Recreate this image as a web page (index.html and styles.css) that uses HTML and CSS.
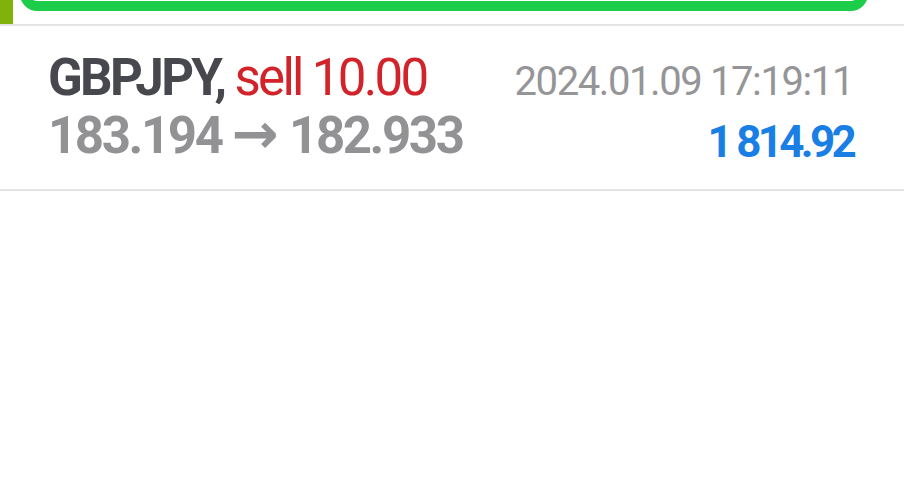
FILE: index.html
```html
<!DOCTYPE html>
<html lang="en">
<head>
    <meta charset="UTF-8">
    <meta name="viewport" content="width=device-width, initial-scale=1.0">
    <title>History</title>
    <link rel="stylesheet" href="styles.css">
</head>
<body>
    <!-- Верх: край предыдущего блока -->
    <div class="top">
        <div class="marker"></div>
        <div class="frame"></div>
    </div>

    <!-- Сделка -->
    <div class="deal">
        <div class="deal-row first">
            <div class="title">GBPJPY, <span class="sell">sell 10.00</span></div>
            <div class="date">2024.01.09 17:19:11</div>
        </div>
        <div class="deal-row second">
            <div class="prices">183.194 <span class="arrow">&rarr;</span> 182.933</div>
            <div class="profit">1 814.92</div>
        </div>
    </div>
</body>
</html>
```

FILE: styles.css
```css
/* Основной стиль для страницы */
body {
    font-family: 'Roboto', 'Liberation Sans', sans-serif;
    background-color: #ffffff;
    margin: 0;
}

/* Верхняя полоса */
.top {
    display: flex;
    height: 24px;
    overflow: hidden;
    border-bottom: 2px solid #e4e4e4;
}

.marker {
    width: 13px;
    background-color: #7fb20a; /* Оливковая метка слева */
}

.frame {
    width: 828px;
    height: 20px;
    margin: -19px 0 0 7px;
    border: 10px solid #1ccd4a;
    border-top: none;
    border-radius: 0 0 17px 17px;
    background-color: #ffffff;
}

/* Строка сделки */
.deal {
    padding: 23px 51px 0 48px;
    height: 140px;
    border-bottom: 2px solid #e4e4e4;
}

.deal-row {
    display: flex;
    justify-content: space-between;
}

.deal-row.first {
    align-items: baseline;
}

.deal-row.second {
    align-items: flex-end;
}

.title {
    font-size: 51px;
    line-height: 58px;
    font-weight: bold;
    color: #47474e;
    letter-spacing: -2.7px;
}

.sell {
    font-weight: normal;
    color: #d2232a;
}

.date {
    font-size: 40px;
    color: #959598;
    letter-spacing: -1.4px;
}

.prices {
    font-size: 51px;
    line-height: 58px;
    font-weight: bold;
    color: #929295;
    letter-spacing: -2.4px;
}

/* Стрелка потолще, как в оригинале */
.arrow {
    font-family: 'DejaVu Sans', sans-serif;
    font-size: 56px;
    line-height: 0;
    letter-spacing: 0;
}

.profit {
    font-size: 44px;
    line-height: 45px;
    font-weight: bold;
    color: #1a7fe4;
    letter-spacing: -3.7px;
}
```
